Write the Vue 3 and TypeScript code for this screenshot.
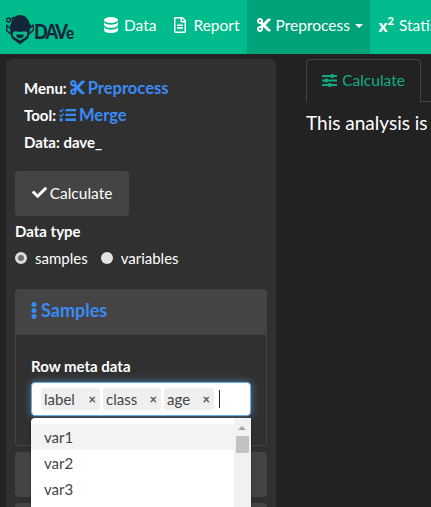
<script setup lang="ts">
const chips: string[] = ['label', 'class', 'age']
const options: string[] = ['var1', 'var2', 'var3']
const cutPath =
  'M278.06 256L444.48 89.57c4.69-4.69 4.69-12.29 0-16.97-32.8-32.8-85.99-32.8-118.79 0L210.18 188.12l-24.86-24.86c4.31-10.92 6.68-22.81 6.68-35.26 0-53.02-42.98-96-96-96S0 74.98 0 128s42.98 96 96 96c4.54 0 8.99-.32 13.36-.93L142.29 256l-32.93 32.93c-4.37-.61-8.83-.93-13.36-.93-53.02 0-96 42.98-96 96s42.98 96 96 96 96-42.98 96-96c0-12.45-2.37-24.34-6.68-35.26l24.86-24.86L325.69 439.4c32.8 32.8 85.99 32.8 118.79 0 4.69-4.68 4.69-12.28 0-16.97L278.06 256zM96 160c-17.64 0-32-14.36-32-32s14.36-32 32-32 32 14.36 32 32-14.36 32-32 32zm0 256c-17.64 0-32-14.36-32-32s14.36-32 32-32 32 14.36 32 32-14.36 32-32 32z'
</script>

<template>
  <div class="page">
    <nav class="navbar">
      <div class="brand">
        <svg class="elf" width="28" height="31" viewBox="0 0 28 31">
          <path d="M5 11C5 5 9 1 14 1C19 1 23 5 24 11Z" fill="#14263a" />
          <circle cx="2.500" cy="6" r="2" fill="none" stroke="#14263a" stroke-width="1.300" />
          <path d="M4 6L8 3" stroke="#14263a" stroke-width="1.500" />
          <rect x="4" y="10" width="21" height="4" rx="1.500" fill="#14263a" />
          <path d="M5 15L1 11.500L.5 16.500L5 20Z" fill="none" stroke="#14263a" stroke-width="1.400" />
          <path d="M23 15L27 11L27.500 16L23 20Z" fill="none" stroke="#14263a" stroke-width="1.400" />
          <path d="M5 12H23V22C23 25 19 26 14 30.500C9 26 5 25 5 22Z" fill="#14263a" />
          <path d="M7 18C9 16 11 17 14 18C17 17 19 16 21 18V21C21 23 18 24 14 26.500C10 24 7 23 7 21Z" fill="#00bc8c" />
          <rect x="7" y="14" width="14" height="3.500" fill="#14263a" />
          <path d="M10.500 20.500H17.500V23L14 24.500L10.500 23Z" fill="#14263a" />
        </svg>
        <span class="dave">DAV<small>e</small></span>
      </div>
      <a class="nav-item first">
        <svg class="ic" width="14" height="16" viewBox="0 0 14 16" fill="#fff">
          <ellipse cx="7" cy="3" rx="7" ry="3" />
          <path d="M0 5C1 7 3.500 7.700 7 7.700S13 7 14 5V8C13 10 10.500 10.800 7 10.800S1 10 0 8Z" />
          <path d="M0 10C1 12 3.500 12.700 7 12.700S13 12 14 10V13C14 14.700 11 16 7 16S0 14.700 0 13Z" />
        </svg>
        Data
      </a>
      <a class="nav-item second">
        <svg class="ic" width="12" height="16" viewBox="0 0 384 512" fill="#fff">
          <path d="M288 248v28c0 6.600-5.400 12-12 12H108c-6.600 0-12-5.400-12-12v-28c0-6.600 5.400-12 12-12h168c6.600 0 12 5.400 12 12zm-12 72H108c-6.600 0-12 5.400-12 12v28c0 6.600 5.400 12 12 12h168c6.600 0 12-5.400 12-12v-28c0-6.600-5.400-12-12-12zm108-188.100V464c0 26.500-21.500 48-48 48H48c-26.500 0-48-21.500-48-48V48C0 21.500 21.500 0 48 0h204.100C264.800 0 277 5.100 286 14.100L369.900 98c9 8.900 14.100 21.200 14.100 33.900zm-128-80V128h76.100L256 51.900zM336 464V176H232c-13.300 0-24-10.700-24-24V48H48v416h288z" />
        </svg>
        Report
      </a>
      <a class="nav-item active">
        <svg class="ic" width="14" height="16" viewBox="0 0 448 512" fill="#fff">
          <path :d="cutPath" />
        </svg>
        Preprocess
        <span class="caret"></span>
      </a>
      <a class="nav-item stat">
        <span class="chi">x<sup>2</sup></span>
        Statistics
      </a>
    </nav>

    <main class="content">
      <aside class="well">
        <div class="crumbs">
          <div class="crumb">
            <span>Menu:</span>
            <span class="link">
              <svg width="15" height="17" viewBox="0 0 448 512" fill="#3a8bf5">
                <path :d="cutPath" />
              </svg>
              Preprocess
            </span>
          </div>
          <div class="crumb">
            <span>Tool:</span>
            <span class="link">
              <svg width="17" height="14" viewBox="0 0 16 13">
                <path d="M.5 2L2 3.300L4.200 .7M.5 6.500L2 7.800L4.200 5.200" fill="none" stroke="#3a8bf5" stroke-width="1.300" />
                <circle cx="2" cy="11" r="1.700" fill="#3a8bf5" />
                <path d="M6 .8H16V3H6ZM6 5.300H16V7.500H6ZM6 9.900H16V12.100H6Z" fill="#3a8bf5" />
              </svg>
              Merge
            </span>
          </div>
          <div class="crumb">Data: dave_</div>
        </div>

        <button class="calc" type="button">
          <svg width="15" height="15" viewBox="0 0 512 512" fill="#fff">
            <path d="M173.898 439.404l-166.4-166.4c-9.997-9.997-9.997-26.206 0-36.204l36.203-36.204c9.997-9.998 26.207-9.998 36.204 0L192 312.69 432.095 72.596c9.997-9.997 26.207-9.997 36.204 0l36.203 36.204c9.997 9.997 9.997 26.206 0 36.204l-294.4 294.401c-9.998 9.997-26.207 9.997-36.204-.001z" />
          </svg>
          Calculate
        </button>

        <div class="field-label">Data type</div>
        <div class="radios">
          <label class="radio"><span class="dot on"></span>samples</label>
          <label class="radio"><span class="dot"></span>variables</label>
        </div>

        <section class="panel">
          <header class="panel-head">
            <svg width="6" height="17" viewBox="0 0 6 17" fill="#3a8bf5">
              <circle cx="3" cy="2.500" r="2.500" />
              <circle cx="3" cy="8.500" r="2.500" />
              <circle cx="3" cy="14.500" r="2.500" />
            </svg>
            Samples
          </header>
          <div class="panel-body">
            <div class="field-label">Row meta data</div>
            <div class="select-wrap">
              <div class="select-input">
                <span v-for="c in chips" :key="c" class="chip">
                  <span>{{ c }}</span><span class="x">×</span>
                </span>
                <span class="cursor"></span>
              </div>
              <div class="dropdown">
                <div class="options">
                  <div
                    v-for="(o, i) in options"
                    :key="o"
                    class="option"
                    :class="{ hover: i === 0 }"
                  >{{ o }}</div>
                </div>
                <div class="scrollbar">
                  <span class="arrow"></span>
                  <span class="thumb"></span>
                </div>
              </div>
            </div>
          </div>
        </section>

        <div class="stub"></div>
        <div class="stub"></div>
      </aside>

      <section class="main">
        <div class="tabs">
          <div class="tab">
            <svg width="15" height="13" viewBox="0 0 15 13" fill="#10ac84">
              <path d="M0 1H15V3H0ZM0 5.500H15V7.500H0ZM0 10H15V12H0Z" />
              <rect x="9" y="0" width="2.500" height="4" />
              <rect x="3" y="4.500" width="2.500" height="4" />
              <rect x="6.500" y="9" width="2.500" height="4" />
            </svg>
            Calculate
          </div>
        </div>
        <p class="note">This analysis is</p>
      </section>
    </main>
  </div>
</template>

<style>
html, body {
  margin: 0;
  background: #222;
  overflow: hidden;
}
</style>

<style scoped>
.page {
  width: 431px;
  height: 507px;
  overflow: hidden;
  background: #222;
  color: #fff;
  font-family: Lato, "Liberation Sans", sans-serif;
  font-size: 15px;
}
.navbar {
  display: flex;
  height: 54px;
  background: #00bc8c;
  white-space: nowrap;
}
.brand {
  display: flex;
  align-items: center;
  width: 89px;
  flex: none;
  padding: 3px 0 0 6px;
  box-sizing: border-box;
}
.elf {
  flex: none;
  margin-top: 2px;
}
.dave {
  margin-top: 5px;
  color: #14263a;
  font-weight: 900;
  font-size: 18px;
  letter-spacing: -1.800px;
  line-height: 1;
  transform: scaleY(1.15);
}
.dave small {
  font-size: 15px;
}
.nav-item {
  display: flex;
  align-items: center;
  gap: 6px;
  flex: none;
  height: 54px;
  box-sizing: border-box;
  padding: 0 0 4px;
  font-size: 15.500px;
  color: #fff;
}
.nav-item.first {
  margin-left: 15px;
}
.nav-item.second {
  margin-left: 18px;
  gap: 7px;
}
.active {
  background: #00a379;
  margin-left: 7px;
  padding: 0 8px 4px 10px;
  gap: 5px;
  width: 123px;
}
.caret {
  width: 0;
  height: 0;
  margin-left: 0;
  margin-top: 2px;
  border-top: 4px solid #fff;
  border-left: 4px solid transparent;
  border-right: 4px solid transparent;
}
.stat {
  margin-left: 9px;
  gap: 5px;
}
.chi {
  font-weight: 900;
  font-size: 17px;
}
.chi sup {
  font-size: 11px;
  line-height: 0;
}
.content {
  display: flex;
  align-items: flex-start;
  height: 453px;
}
.well {
  flex: none;
  box-sizing: border-box;
  width: 270px;
  height: 460px;
  margin: 5px 0 0 6px;
  padding: 19px 9px 0;
  background: #303030;
  border-radius: 5px;
}
.crumbs {
  display: flex;
  flex-direction: column;
  gap: 8px;
  padding-left: 9px;
  margin-bottom: 20px;
}
.crumb {
  display: flex;
  align-items: center;
  height: 19px;
  gap: 3px;
  font-weight: 700;
  font-size: 15px;
}
.link {
  display: flex;
  align-items: center;
  gap: 3px;
  color: #3a8bf5;
  font-size: 16.500px;
}
.calc {
  display: flex;
  align-items: center;
  justify-content: center;
  gap: 3px;
  box-sizing: border-box;
  width: 114px;
  height: 45px;
  padding: 0 0 2px;
  border: 0;
  border-radius: 4px;
  background: #444;
  color: #fff;
  font: inherit;
  font-size: 15.500px;
}
.field-label {
  margin-top: 6px;
  height: 19px;
  line-height: 19px;
  font-weight: 700;
  font-size: 15px;
}
.radios {
  display: flex;
  gap: 13px;
  margin-top: 7px;
  height: 19px;
}
.radio {
  display: flex;
  align-items: center;
  gap: 8px;
  font-size: 15px;
}
.dot {
  box-sizing: border-box;
  width: 12px;
  height: 12px;
  border-radius: 50%;
  background: #e4e4e4;
}
.dot.on {
  border: 3.500px solid #dcdcdc;
  background: #6d6d6d;
}
.panel {
  margin-top: 22px;
  width: 252px;
  border-radius: 4px;
}
.panel-head {
  display: flex;
  align-items: center;
  gap: 4px;
  box-sizing: border-box;
  height: 46px;
  padding: 0 0 4px 16px;
  background: #444;
  border-radius: 4px 4px 0 0;
  color: #3a8bf5;
  font-size: 18px;
  font-weight: 700;
}
.panel-body {
  box-sizing: border-box;
  height: 111px;
  padding: 22px 15px 0;
  border: 1px solid #444;
  border-top: 0;
  border-radius: 0 0 4px 4px;
}
.panel-body .field-label {
  margin-top: 0;
}
.select-wrap {
  position: relative;
  margin-top: 6px;
}
.select-input {
  display: flex;
  align-items: center;
  gap: 3px;
  box-sizing: border-box;
  width: 220px;
  height: 34px;
  padding: 0 9px;
  background: #fff;
  border: 1px solid #66afe9;
  border-radius: 4px;
  box-shadow: 0 0 8px rgba(102, 175, 233, .6);
  color: #444;
}
.chip {
  display: flex;
  align-items: center;
  justify-content: space-between;
  box-sizing: border-box;
  height: 22px;
  padding: 0 4px 0 3px;
  background: #efefef;
  border-radius: 3px;
  font-size: 15px;
}
.chip:nth-child(1) { width: 59px; }
.chip:nth-child(2) { width: 58px; }
.chip:nth-child(3) { width: 50px; }
.x {
  font-size: 13px;
  font-weight: 700;
  color: #555;
}
.cursor {
  width: 1px;
  height: 18px;
  background: #222;
  margin-left: 2px;
}
.dropdown {
  position: absolute;
  top: 36px;
  left: 0;
  display: flex;
  width: 220px;
  height: 200px;
  padding-top: 6px;
  box-sizing: border-box;
  background: #fff;
  border-radius: 4px 4px 0 0;
  box-shadow: 0 1px 3px rgba(0, 0, 0, .4);
  z-index: 2;
}
.options {
  flex: 1;
  color: #444;
  font-size: 15px;
}
.option {
  height: 26px;
  line-height: 26px;
  padding-left: 13px;
}
.option.hover {
  background: #f3f3f3;
}
.scrollbar {
  position: relative;
  flex: none;
  width: 17px;
  margin-top: -6px;
  background: #f1f1f1;
}
.arrow {
  position: absolute;
  top: 8px;
  left: 4px;
  width: 0;
  height: 0;
  border-left: 4px solid transparent;
  border-right: 4px solid transparent;
  border-bottom: 4px solid #a3a3a3;
}
.thumb {
  position: absolute;
  top: 18px;
  left: 2px;
  width: 13px;
  height: 17px;
  background: #c1c1c1;
}
.stub {
  margin-top: 6px;
  width: 252px;
  height: 45px;
  background: #444;
  border-radius: 4px;
}
.main {
  flex: none;
  margin: 5px 0 0 30px;
  width: 300px;
}
.tabs {
  height: 42px;
  border-bottom: 1px solid #444;
}
.tab {
  display: flex;
  align-items: center;
  justify-content: center;
  gap: 5px;
  box-sizing: border-box;
  width: 115px;
  height: 43px;
  padding-bottom: 2px;
  background: #222;
  border: 1px solid #444;
  border-bottom: 0;
  border-radius: 4px 4px 0 0;
  color: #10ac84;
  font-size: 15.500px;
}
.note {
  margin: 9px 0 0;
  white-space: nowrap;
  font-size: 19px;
  line-height: 24px;
}
.ic {
  flex: none;
}
</style>
